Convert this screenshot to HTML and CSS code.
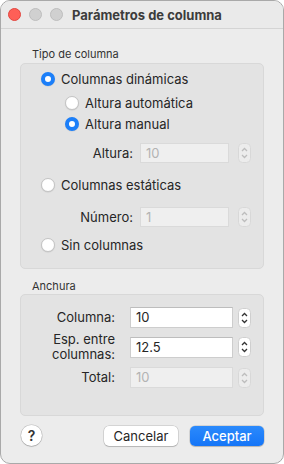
FILE: index.html
```html
<!DOCTYPE html>
<html lang="es">
<head>
  <meta charset="UTF-8">
  <meta name="viewport" content="width=device-width, initial-scale=1.0">
  <title>Parámetros de columna</title>
  <link rel="stylesheet" href="styles.css">
</head>
<body>

<div class="window">
  <div class="titlebar">
    <span class="light light-red"></span>
    <span class="light"></span>
    <span class="light"></span>
    <span class="title">Parámetros de columna</span>
  </div>

  <div class="content">
    <div class="group-label">Tipo de columna</div>
    <div class="group group-type">
      <div class="radio-row">
        <span class="radio checked"></span>
        <span>Columnas dinámicas</span>
      </div>
      <div class="radio-row sub row-auto">
        <span class="radio"></span>
        <span>Altura automática</span>
      </div>
      <div class="radio-row sub row-manual">
        <span class="radio checked"></span>
        <span>Altura manual</span>
      </div>
      <div class="field-row row-height">
        <label>Altura:</label>
        <div class="input disabled">10</div>
        <svg class="stepper disabled" width="13" height="20" viewBox="0 0 13 20">
          <rect x="0.5" y="0.5" width="12" height="19" rx="4" />
          <path d="M4 8 L6.5 5.5 L9 8" />
          <path d="M4 12 L6.5 14.5 L9 12" />
        </svg>
      </div>
      <div class="radio-row row-static">
        <span class="radio"></span>
        <span>Columnas estáticas</span>
      </div>
      <div class="field-row row-number">
        <label>Número:</label>
        <div class="input disabled">1</div>
        <svg class="stepper disabled" width="13" height="20" viewBox="0 0 13 20">
          <rect x="0.5" y="0.5" width="12" height="19" rx="4" />
          <path d="M4 8 L6.5 5.5 L9 8" />
          <path d="M4 12 L6.5 14.5 L9 12" />
        </svg>
      </div>
      <div class="radio-row row-none">
        <span class="radio"></span>
        <span>Sin columnas</span>
      </div>
    </div>

    <div class="group-label label-width">Anchura</div>
    <div class="group group-width">
      <div class="width-row">
        <label>Columna:</label>
        <div class="input">10</div>
        <svg class="stepper" width="13" height="20" viewBox="0 0 13 20">
          <rect x="0.5" y="0.5" width="12" height="19" rx="4" />
          <path d="M4 8 L6.5 5.5 L9 8" />
          <path d="M4 12 L6.5 14.5 L9 12" />
        </svg>
      </div>
      <div class="width-row row-gap">
        <label>Esp. entre<br>columnas:</label>
        <div class="input">12.5</div>
        <svg class="stepper" width="13" height="20" viewBox="0 0 13 20">
          <rect x="0.5" y="0.5" width="12" height="19" rx="4" />
          <path d="M4 8 L6.5 5.5 L9 8" />
          <path d="M4 12 L6.5 14.5 L9 12" />
        </svg>
      </div>
      <div class="width-row row-total">
        <label>Total:</label>
        <div class="input disabled">10</div>
        <svg class="stepper disabled" width="13" height="20" viewBox="0 0 13 20">
          <rect x="0.5" y="0.5" width="12" height="19" rx="4" />
          <path d="M4 8 L6.5 5.5 L9 8" />
          <path d="M4 12 L6.5 14.5 L9 12" />
        </svg>
      </div>
    </div>

    <div class="footer">
      <button class="help">?</button>
      <div class="spacer"></div>
      <button class="btn">Cancelar</button>
      <button class="btn primary">Aceptar</button>
    </div>
  </div>
</div>

</body>
</html>
```

FILE: styles.css
```css
body {
  margin: 0;
  padding: 0;
  background-color: #fff;
  font-family: Inter, "Noto Sans", sans-serif;
  font-size: 13px;
  color: #262626;
}
.window {
  box-sizing: border-box;
  width: 284px;
  height: 464px;
  border: 1px solid #a9a9a9;
  border-radius: 10px;
  background-color: #ececec;
  overflow: hidden;
}
.titlebar {
  display: flex;
  align-items: center;
  height: 27px;
  padding-left: 7px;
  border-bottom: 1px solid #d4d4d4;
  background-color: #eaeaea;
}
.light {
  width: 11px;
  height: 11px;
  margin-right: 8px;
  border-radius: 50%;
  background-color: #d0d0d0;
  border: 0.5px solid #bdbdbd;
}
.light-red {
  background-color: #fe5f57;
  border-color: #e2463f;
}
.title {
  margin-left: 1px;
  font-weight: 700;
  font-size: 13px;
  color: #3c3c3c;
}
.content {
  padding: 0 19px 0 19px;
}
.group-label {
  margin-top: 18px;
  margin-left: 12px;
  height: 14px;
  line-height: 14px;
  font-size: 11px;
  color: #333;
  margin-bottom: 2px;
}
.label-width {
  margin-top: 10px;
  margin-bottom: 1px;
}
.group {
  box-sizing: border-box;
  border: 1px solid #d8d8d8;
  border-radius: 5px;
  background-color: #e3e3e3;
}
.group-type {
  height: 206px;
  padding-top: 5px;
}
.group-width {
  height: 122px;
  padding-top: 12px;
}
.radio-row {
  display: flex;
  align-items: center;
  height: 20px;
  padding-left: 20px;
}
.radio-row.sub {
  padding-left: 44px;
}
.row-auto { margin-top: 4px; }
.row-manual { margin-top: 1px; }
.row-static { margin-top: 12px; }
.row-none { margin-top: 8px; }
.radio {
  box-sizing: border-box;
  width: 14px;
  height: 14px;
  margin-right: 6px;
  border-radius: 50%;
  background-color: #fff;
  border: 0.5px solid #c4c4c4;
  box-shadow: 0 0.5px 1px rgba(0, 0, 0, 0.12);
}
.radio.checked {
  border: 4.5px solid #1c7ff9;
  background-color: #fff;
}
.field-row {
  display: flex;
  align-items: center;
  height: 20px;
}
.field-row label {
  width: 112px;
  text-align: right;
  margin-right: 7px;
}
.field-row .input {
  width: 89px;
  margin-right: 9px;
}
.row-height { margin-top: 9px; }
.row-number { margin-top: 12px; }
.input {
  box-sizing: border-box;
  height: 20px;
  line-height: 19px;
  padding-left: 5px;
  background-color: #fff;
  border: 1px solid #cdcdcd;
  border-top-color: #bdbdbd;
}
.input.disabled {
  background-color: #efefef;
  border-color: #dadada;
  color: #b3b3b3;
}
.stepper rect {
  fill: #fff;
  stroke: #cfcfcf;
}
.stepper path {
  fill: none;
  stroke: #333;
  stroke-width: 1.3;
}
.stepper.disabled rect {
  fill: #ececec;
  stroke: #d8d8d8;
}
.stepper.disabled path {
  stroke: #bdbdbd;
}
.width-row {
  display: flex;
  align-items: center;
  min-height: 20px;
}
.width-row label {
  width: 94px;
  text-align: right;
  line-height: 15px;
  margin-right: 15px;
}
.width-row .input {
  width: 103px;
  margin-right: 5px;
  height: 21px;
}
.row-gap {
  margin-top: 4px;
  height: 30px;
}
.row-total { margin-top: 5px; }
.footer {
  display: flex;
  align-items: center;
  margin-top: 9px;
  padding-left: 1px;
}
.spacer {
  flex: 1;
}
.help {
  box-sizing: border-box;
  width: 21px;
  height: 21px;
  padding: 0;
  border: none;
  border-radius: 50%;
  background-color: #fff;
  box-shadow: 0 0 0 0.5px rgba(0, 0, 0, 0.2), 0 1px 1px rgba(0, 0, 0, 0.15);
  font-family: Inter, sans-serif;
  font-size: 14px;
  font-weight: 600;
  color: #333;
}
.btn {
  width: 74px;
  height: 20px;
  padding: 0;
  margin-left: 12px;
  border: none;
  border-radius: 5px;
  background-color: #fff;
  box-shadow: 0 0 0 0.5px rgba(0, 0, 0, 0.2), 0 1px 1px rgba(0, 0, 0, 0.15);
  font-family: Inter, sans-serif;
  font-size: 13px;
  color: #262626;
}
.btn.primary {
  background: linear-gradient(#2b8afc, #1575f7);
  color: #fff;
  font-weight: 500;
}
```
